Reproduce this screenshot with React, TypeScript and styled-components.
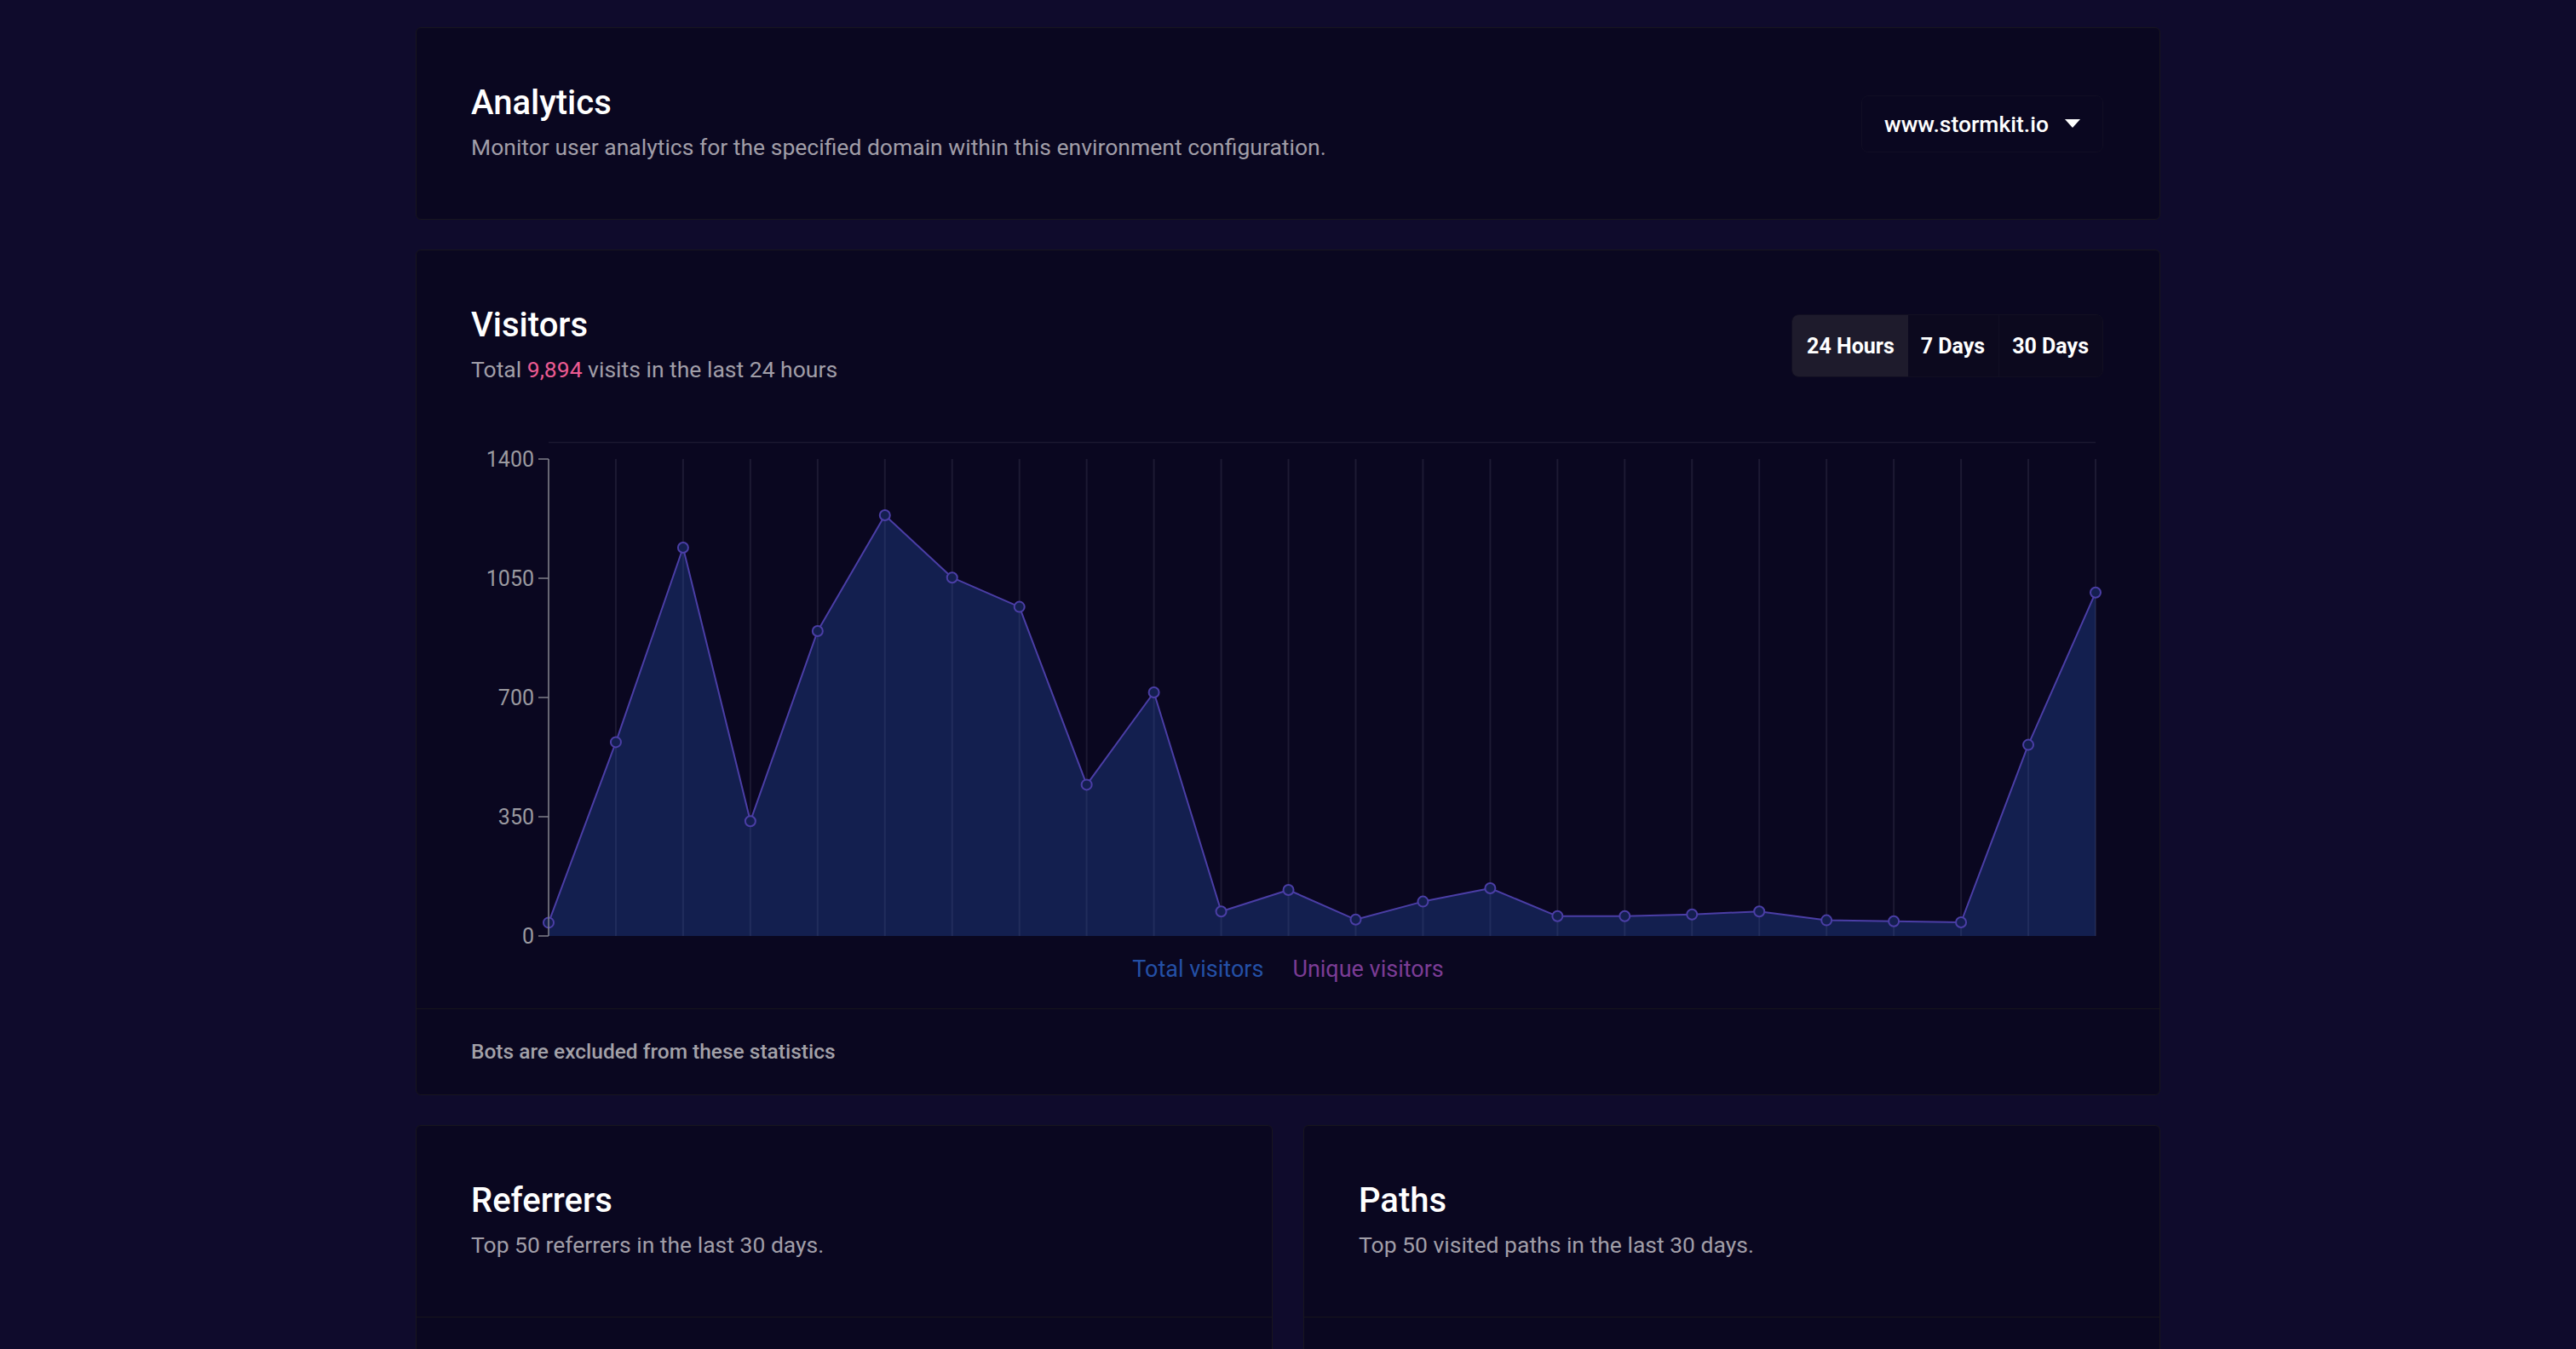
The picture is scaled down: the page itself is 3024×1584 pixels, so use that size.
import React from "react";
import styled, { createGlobalStyle } from "styled-components";

const GlobalStyle = createGlobalStyle`
  html, body {
    margin: 0;
    padding: 0;
    background: #0f0b2c;
    font-family: Roboto, "Noto Sans", "Liberation Sans", sans-serif;
    color: #ffffff;
  }
  * { box-sizing: border-box; }
`;

const Container = styled.main`
  max-width: 2048px;
  margin: 0 auto;
  padding: 32px 0;
  display: flex;
  flex-direction: column;
  gap: 35px;
`;

const Card = styled.section`
  background: #0a0720;
  border: 1px solid #18161e;
  border-radius: 6px;
  overflow: hidden;
`;

const CardHeader = styled.header<{ $bordered?: boolean }>`
  display: flex;
  justify-content: space-between;
  align-items: center;
  padding: 64px 66px 64px 64px;
  border-bottom: ${(p) => (p.$bordered ? "1px solid #17151c" : "none")};
`;

const HeaderText = styled.div`
  display: flex;
  flex-direction: column;
`;

const Title = styled.h2`
  margin: 0;
  font-size: 40px;
  line-height: 48px;
  font-weight: 500;
  color: #ffffff;
`;

const Subtitle = styled.p`
  margin: 8px 0 0;
  font-size: 26.5px;
  line-height: 40px;
  font-weight: 400;
  color: #a19ea8;
`;

const Highlight = styled.span`
  color: #ec5b92;
`;

const DomainButton = styled.button`
  display: inline-flex;
  align-items: center;
  gap: 19px;
  height: 67px;
  padding: 0 26px;
  background: transparent;
  border: 1px solid #110e24;
  border-radius: 8px;
  color: #ffffff;
  font-family: inherit;
  font-size: 26.5px;
  font-weight: 500;
  cursor: pointer;
`;

const RangeGroup = styled.div`
  display: flex;
  height: 74px;
  border: 1px solid #120f22;
  border-radius: 8px;
  overflow: hidden;
  background: #0c091e;
`;

const RangeButton = styled.button<{ $active?: boolean; $divided?: boolean }>`
  display: flex;
  align-items: center;
  padding: 0 16px 0 ${(p) => (p.$active ? "17px" : "15px")};
  border: none;
  border-left: ${(p) => (p.$divided ? "1px solid #110e24" : "none")};
  background: ${(p) => (p.$active ? "#1e1b2c" : "transparent")};
  color: #ffffff;
  font-family: inherit;
  font-size: 25px;
  font-weight: 700;
  cursor: pointer;
`;

const ChartSection = styled.div`
  display: flex;
  flex-direction: column;
`;

const ChartSvg = styled.svg`
  display: block;
  width: 100%;
  height: 600px;
`;

const Legend = styled.div`
  display: flex;
  justify-content: center;
  gap: 34px;
  margin-top: 2px;
  padding-bottom: 28px;
`;

const LegendItem = styled.span<{ $color: string }>`
  font-size: 27px;
  line-height: 36px;
  color: ${(p) => p.$color};
`;

const Footer = styled.footer`
  border-top: 1px solid #17151c;
  padding: 32px 64px;
  font-size: 24.5px;
  line-height: 36px;
  font-weight: 500;
  color: #a3a1a8;
`;

const TwoColumns = styled.div`
  display: grid;
  grid-template-columns: 1fr 1fr;
  gap: 36px;
`;

const CardBody = styled.div`
  min-height: 320px;
`;

const values = [
  39, 569, 1140, 337, 895, 1235, 1052, 966, 444, 715, 72, 135, 48, 101, 140, 58,
  58, 63, 72, 46, 43, 40, 561, 1008,
];

const X0 = 155;
const X1 = 1971;
const Y_TOP = 21;
const Y_BOTTOM = 581;
const MAX = 1400;

const xAt = (i: number) => X0 + ((X1 - X0) / (values.length - 1)) * i;
const yAt = (v: number) => Y_BOTTOM - ((Y_BOTTOM - Y_TOP) * v) / MAX;

const VisitorsChart: React.FC = () => {
  const pts = values.map((v, i) => [xAt(i), yAt(v)] as const);
  const line = pts.map(([x, y], i) => `${i === 0 ? "M" : "L"}${x.toFixed(1)},${y.toFixed(1)}`).join(" ");
  const area = `${line} L${X1},${Y_BOTTOM} L${X0},${Y_BOTTOM} Z`;
  const ticks = [0, 350, 700, 1050, 1400];
  return (
    <ChartSvg viewBox="0 0 2046 600" preserveAspectRatio="none">
      <line x1={X0} x2={X1} y1={1.5} y2={1.5} stroke="#1b1830" strokeWidth={1.5} />
      {pts.map(([x], i) => (
        <line key={`g${i}`} x1={x} x2={x} y1={Y_TOP} y2={Y_BOTTOM} stroke="#1d1a33" strokeWidth={2} />
      ))}
      <path d={area} fill="rgb(44,90,190)" fillOpacity={0.3} />
      <path d={line} fill="none" stroke="#4b3ea6" strokeWidth={2} strokeLinejoin="round" />
      {pts.map(([x, y], i) => (
        <circle key={`c${i}`} cx={x} cy={y} r={6} fill="#141f50" stroke="#4b3ea6" strokeWidth={2} />
      ))}
      <line x1={X0} x2={X0} y1={Y_TOP} y2={Y_BOTTOM} stroke="#80808a" strokeWidth={1.5} />
      {ticks.map((t) => (
        <g key={t}>
          <line x1={143} x2={X0} y1={yAt(t)} y2={yAt(t)} stroke="#80808a" strokeWidth={1.5} />
          <text
            x={138}
            y={yAt(t)}
            textAnchor="end"
            dominantBaseline="central"
            fontSize={25}
            fill="#9b9aa0"
            fontFamily="Roboto, sans-serif"
          >
            {t}
          </text>
        </g>
      ))}
    </ChartSvg>
  );
};

const Caret: React.FC = () => (
  <svg width="18" height="10" viewBox="0 0 18 10" aria-hidden="true">
    <path d="M0 0 L18 0 L9 10 Z" fill="#ffffff" />
  </svg>
);

export default function App() {
  return (
    <>
      <GlobalStyle />
      <Container>
        <Card>
          <CardHeader>
            <HeaderText>
              <Title>Analytics</Title>
              <Subtitle>Monitor user analytics for the specified domain within this environment configuration.</Subtitle>
            </HeaderText>
            <DomainButton>
              www.stormkit.io
              <Caret />
            </DomainButton>
          </CardHeader>
        </Card>

        <Card>
          <CardHeader>
            <HeaderText>
              <Title>Visitors</Title>
              <Subtitle>
                Total <Highlight>9,894</Highlight> visits in the last 24 hours
              </Subtitle>
            </HeaderText>
            <RangeGroup>
              <RangeButton $active>24 Hours</RangeButton>
              <RangeButton>7 Days</RangeButton>
              <RangeButton $divided>30 Days</RangeButton>
            </RangeGroup>
          </CardHeader>
          <ChartSection>
            <VisitorsChart />
            <Legend>
              <LegendItem $color="#2450a6">Total visitors</LegendItem>
              <LegendItem $color="#7b3c95">Unique visitors</LegendItem>
            </Legend>
          </ChartSection>
          <Footer>Bots are excluded from these statistics</Footer>
        </Card>

        <TwoColumns>
          <Card>
            <CardHeader $bordered>
              <HeaderText>
                <Title>Referrers</Title>
                <Subtitle>Top 50 referrers in the last 30 days.</Subtitle>
              </HeaderText>
            </CardHeader>
            <CardBody />
          </Card>
          <Card>
            <CardHeader $bordered>
              <HeaderText>
                <Title>Paths</Title>
                <Subtitle>Top 50 visited paths in the last 30 days.</Subtitle>
              </HeaderText>
            </CardHeader>
            <CardBody />
          </Card>
        </TwoColumns>
      </Container>
    </>
  );
}
